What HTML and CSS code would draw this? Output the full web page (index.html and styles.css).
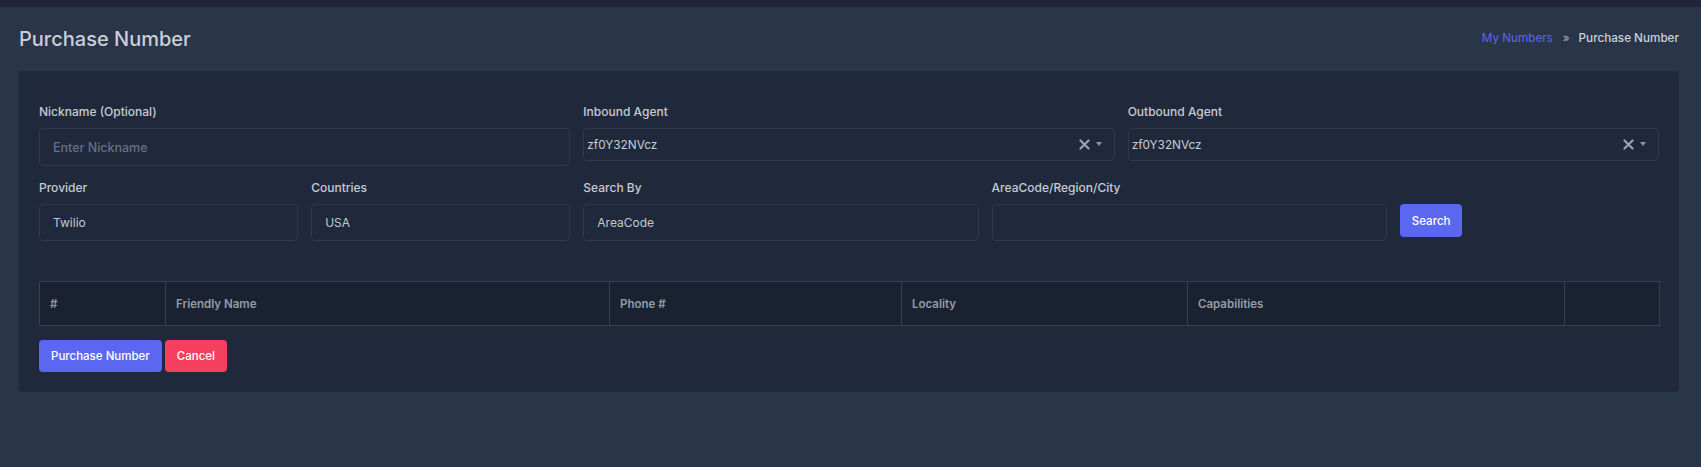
FILE: index.html
```html
<!DOCTYPE html>
<html lang="en">
<head>
<meta charset="utf-8">
<title>Purchase Number</title>
<link rel="stylesheet" href="styles.css">
</head>
<body>
<div class="topbar"></div>
<main class="page">
  <header class="page-head">
    <h1 class="page-title">Purchase Number</h1>
    <nav class="crumbs">
      <a class="crumb-link" href="#">My Numbers</a>
      <span class="crumb-sep">»</span>
      <span class="crumb-current">Purchase Number</span>
    </nav>
  </header>

  <section class="card">
    <div class="grid row-one">
      <div class="field span-4">
        <label class="label">Nickname (Optional)</label>
        <div class="input input-tall placeholder">Enter Nickname</div>
      </div>
      <div class="field span-4">
        <label class="label">Inbound Agent</label>
        <div class="select">
          <span class="select-value">zf0Y32NVcz</span>
          <span class="select-tools">
            <svg class="clear-icon" width="11" height="11" viewBox="0 0 11 11"><path d="M1.5 1.5 L9.5 9.5 M9.5 1.5 L1.5 9.5" stroke="#9aa2af" stroke-width="2.2" stroke-linecap="round"/></svg>
            <span class="caret"></span>
          </span>
        </div>
      </div>
      <div class="field span-4">
        <label class="label">Outbound Agent</label>
        <div class="select">
          <span class="select-value">zf0Y32NVcz</span>
          <span class="select-tools">
            <svg class="clear-icon" width="11" height="11" viewBox="0 0 11 11"><path d="M1.5 1.5 L9.5 9.5 M9.5 1.5 L1.5 9.5" stroke="#9aa2af" stroke-width="2.2" stroke-linecap="round"/></svg>
            <span class="caret"></span>
          </span>
        </div>
      </div>
    </div>

    <div class="grid row-two">
      <div class="field span-2">
        <label class="label">Provider</label>
        <div class="input">Twilio</div>
      </div>
      <div class="field span-2">
        <label class="label">Countries</label>
        <div class="input">USA</div>
      </div>
      <div class="field span-3">
        <label class="label">Search By</label>
        <div class="input">AreaCode</div>
      </div>
      <div class="field span-3">
        <label class="label">AreaCode/Region/City</label>
        <div class="input"></div>
      </div>
      <div class="field span-2">
        <span class="label label-spacer">&nbsp;</span>
        <div class="action-row"><button class="btn btn-primary btn-search">Search</button></div>
      </div>
    </div>

    <table class="results">
      <thead>
        <tr>
          <th class="c-idx">#</th>
          <th class="c-name">Friendly Name</th>
          <th class="c-phone">Phone #</th>
          <th class="c-loc">Locality</th>
          <th class="c-cap">Capabilities</th>
          <th class="c-act"></th>
        </tr>
      </thead>
    </table>

    <div class="actions">
      <button class="btn btn-primary">Purchase Number</button>
      <button class="btn btn-danger">Cancel</button>
    </div>
  </section>
</main>
</body>
</html>
```

FILE: styles.css
```css
* { box-sizing: border-box; }

html, body {
  margin: 0;
  padding: 0;
  background: #293548;
  font-family: "Inter", "Liberation Sans", sans-serif;
  height: 100%;
}

.topbar {
  height: 7px;
  background: #1e2637;
}

.page {
  padding: 17px 22px 0 19px;
}

.page-head {
  display: flex;
  align-items: center;
  justify-content: space-between;
  height: 30px;
  margin-bottom: 17px;
}

.page-title {
  margin: 0;
  font-size: 20px;
  line-height: 30px;
  font-weight: 500;
  color: #c9ced7;
}

.crumbs {
  display: flex;
  align-items: center;
  font-size: 11.7px;
  line-height: 20px;
  margin-top: -2px;
}

.crumb-link {
  color: #5b67f1;
  text-decoration: none;
}

.crumb-sep {
  color: #aab1bd;
  padding: 0 9px 0 10px;
}

.crumb-current {
  color: #cdd2da;
  font-weight: 500;
}

.card {
  background: #1f293b;
  border-radius: 4px;
  padding: 31px 20px 20px;
}

.grid {
  display: grid;
  grid-template-columns: repeat(12, 1fr);
  column-gap: 13px;
  align-items: start;
}

.row-two { margin-top: 12px; }

.span-2 { grid-column: span 2; }
.span-3 { grid-column: span 3; }
.span-4 { grid-column: span 4; }

.field {
  display: flex;
  flex-direction: column;
}

.label {
  display: block;
  font-size: 12px;
  line-height: 20px;
  font-weight: 500;
  color: #c6cbd3;
  margin-bottom: 6px;
}

.input {
  height: 37px;
  border: 1px solid #2e394c;
  border-radius: 4px;
  background: #1f293b;
  padding: 0 13px;
  display: flex;
  align-items: center;
  font-size: 12px;
  color: #c3c8d1;
}

.input-tall { height: 38px; }

.placeholder {
  font-size: 12.5px;
  color: #667083;
  font-weight: 500;
}

.select {
  height: 33px;
  border: 1px solid #2e394c;
  border-radius: 4px;
  background: #1f293b;
  padding: 0 12px 0 3px;
  display: flex;
  align-items: center;
  justify-content: space-between;
  font-size: 11.8px;
  color: #c8cdd5;
}

.select-tools {
  display: flex;
  align-items: center;
  gap: 6px;
}

.clear-icon { display: block; }

.caret {
  width: 0;
  height: 0;
  border-left: 3px solid transparent;
  border-right: 3px solid transparent;
  border-top: 4px solid #8d95a3;
  margin-top: -1px;
}

.label-spacer { visibility: hidden; }

.action-row { display: flex; }

.btn {
  font-family: inherit;
  font-size: 11.5px;
  font-weight: 500;
  line-height: 20px;
  color: #ffffff;
  border: none;
  border-radius: 4px;
  padding: 6px 12px;
  height: 32px;
  cursor: pointer;
}

.btn-search { height: 33px; }

.btn-primary { background: #5b67f1; }
.btn-danger { background: #f43f5e; }

.results {
  width: 100%;
  margin-top: 40px;
  border-collapse: collapse;
  table-layout: fixed;
}

.results th {
  background: #1a2231;
  border: 1px solid #343f51;
  text-align: left;
  font-size: 11.5px;
  line-height: 20px;
  font-weight: 600;
  color: #959ca8;
  padding: 12px 10px 11px;
}

.c-idx { width: 126px; }
.c-name { width: 444px; }
.c-phone { width: 292px; }
.c-loc { width: 286px; }
.c-cap { width: 377px; }
.c-act { width: 95px; }

.actions {
  display: flex;
  gap: 3px;
  margin-top: 14px;
}
```
